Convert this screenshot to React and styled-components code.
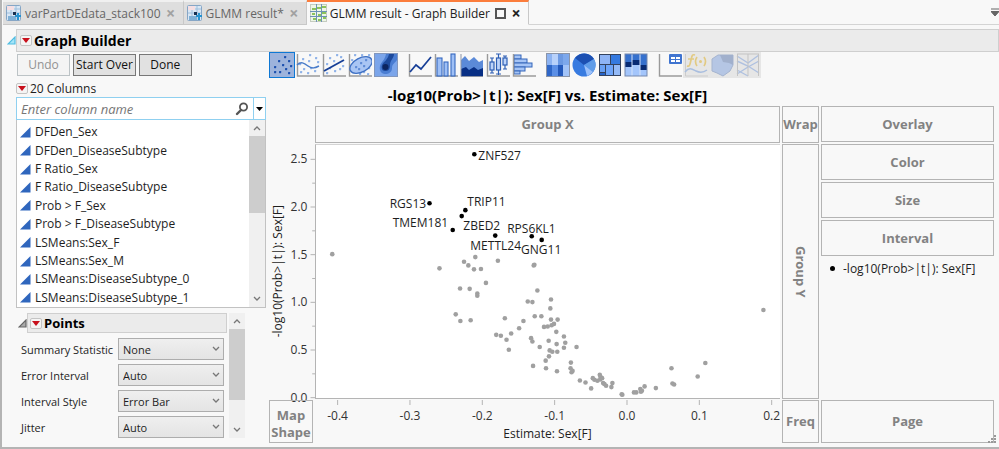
import React, { useState } from 'react'
import styled, { createGlobalStyle } from 'styled-components'

const COLUMNS = [
  'DFDen_Sex',
  'DFDen_DiseaseSubtype',
  'F Ratio_Sex',
  'F Ratio_DiseaseSubtype',
  'Prob > F_Sex',
  'Prob > F_DiseaseSubtype',
  'LSMeans:Sex_F',
  'LSMeans:Sex_M',
  'LSMeans:DiseaseSubtype_0',
  'LSMeans:DiseaseSubtype_1',
]

const OPTIONS = [
  { id: 'summary', label: 'Summary Statistic', values: ['None', 'Mean', 'Median'] },
  { id: 'error', label: 'Error Interval', values: ['Auto', 'None', 'Range'] },
  { id: 'style', label: 'Interval Style', values: ['Error Bar', 'Band'] },
  { id: 'jitter', label: 'Jitter', values: ['Auto', 'None'] },
]

// the plot area is divided in SPAN_X by SPAN_Y units
const SPAN_X = 1398
const SPAN_Y = 765
const px = (x) => `${(x / SPAN_X) * 100}%`
const py = (y) => `${(y / SPAN_Y) * 100}%`
const scaleX = (v) => 938 + v * 2175
const scaleY = (v) => 761 - v * 286

const X_TICKS = [-0.4, -0.3, -0.2, -0.1, 0, 0.1, 0.2]
const Y_TICKS = [0, 0.25, 0.5, 0.75, 1, 1.25, 1.5, 1.75, 2, 2.25, 2.5]

const GENES = [
  { name: 'ZNF527', at: [477, 28], label: [489, 45] },
  { name: 'RGS13', at: [342, 176], label: [222, 192] },
  { name: 'TRIP11', at: [450, 197], label: [456, 183] },
  { name: 'ZBED2', at: [439, 215], label: [444, 258] },
  { name: 'TMEM181', at: [412, 257], label: [231, 249] },
  { name: 'METTL24', at: [540, 274], label: [465, 318] },
  { name: 'RPS6KL1', at: [650, 276], label: [576, 266] },
  { name: 'GNG11', at: [680, 287], label: [618, 331] },
]

const POINTS = [
  [49, 330], [480, 339], [548, 350], [446, 353], [459, 364], [372, 373],
  [476, 376], [497, 375], [512, 417], [434, 434], [463, 435], [486, 449],
  [486, 456], [421, 512], [435, 532], [466, 530], [569, 524], [625, 532],
  [612, 554], [588, 570], [543, 574], [557, 577], [574, 589], [581, 619],
  [658, 362], [656, 364], [667, 440], [638, 473], [652, 475], [708, 467],
  [706, 494], [659, 518], [679, 518], [708, 528], [728, 528], [717, 541],
  [710, 545], [698, 549], [687, 550], [724, 565], [648, 584], [652, 594],
  [701, 592], [747, 579], [751, 598], [725, 602], [747, 613], [785, 611],
  [674, 611], [704, 621], [712, 625], [727, 625], [702, 639], [692, 652],
  [654, 668], [693, 675], [726, 684], [768, 658], [767, 675], [773, 683],
  [770, 687], [795, 712], [812, 718], [829, 736], [834, 705], [839, 710],
  [848, 713], [855, 695], [857, 701], [862, 705], [856, 709], [865, 720],
  [869, 723], [874, 728], [893, 720], [890, 732], [921, 754], [923, 755],
  [958, 748], [965, 748], [977, 738], [982, 743], [979, 746], [990, 730],
  [1024, 735], [1074, 721], [1079, 724], [1071, 675], [1150, 700],
  [1173, 659], [1348, 499],
]

const Axes = () => <path d="M1.5 1v22H24" fill="none" stroke="#9a9a9a" strokeWidth="1.4" />

const Dots = ({ list, color = '#4a7cc9', size = 2.2 }) =>
  list.map(([x, y]) => (
    <rect key={`${x}-${y}`} x={x} y={y} width={size} height={size} rx="0.6" fill={color} />
  ))

const ICONS = {
  points: (
    <>
      <rect x="0" y="0" width="24" height="24" fill="#9db3dc" />
      <Dots color="#1b4fae" list={[[14, 3], [8, 7], [18, 7], [4, 13], [12, 11], [20, 12], [9, 18], [15, 15], [18, 19], [4, 18]]} />
    </>
  ),
  smoother: (
    <>
      <Axes />
      <Dots color="#8fb2e8" list={[[13, 1], [6, 5], [19, 4], [12, 7], [3, 10], [21, 8], [7, 15], [14, 14], [18, 17], [4, 18], [11, 19]]} />
      <path d="M1 12c4-4 7-2 11 1s7 2 11 0" fill="none" stroke="#4a7cc9" strokeWidth="1.5" />
    </>
  ),
  fit: (
    <>
      <Axes />
      <Dots color="#8fb2e8" list={[[14, 1], [7, 4], [18, 3], [11, 7], [4, 10], [20, 12], [12, 17], [17, 15], [4, 19], [7, 14]]} />
      <path d="M2 18L22 7" stroke="#173f97" strokeWidth="1.8" />
    </>
  ),
  ellipse: (
    <>
      <Axes />
      <Dots color="#8fb2e8" list={[[6, 1], [13, 1], [3, 6], [20, 1], [20, 14], [4, 18], [15, 18], [19, 20], [11, 20]]} />
      <ellipse cx="13" cy="12" rx="12" ry="7" transform="rotate(-28 13 12)" fill="#a9c5f4" stroke="#3e70c4" strokeWidth="1.3" />
      <Dots color="#5f8bd6" list={[[7, 13], [12, 9], [15, 12], [17, 6], [10, 15]]} />
    </>
  ),
  contour: (
    <>
      <rect x="0.5" y="0.5" width="23" height="23" fill="#7ba5ea" stroke="#8297bd" />
      <path d="M12 1h11v6c-2 3-5 4-5 8s-3 6-7 6-6-4-5-8 5-6 6-12z" fill="#4a7dd2" />
      <path d="M15 1h5c0 4-4 6-4 11s-2 6-5 6-4-3-3-6 6-5 7-11z" fill="#1d4a9c" />
      <circle cx="11.500" cy="14" r="3" fill="#0c2560" />
    </>
  ),
  line: (
    <>
      <Axes />
      <path d="M2 19l6-7 5 4 10-12" fill="none" stroke="#173f97" strokeWidth="1.7" />
    </>
  ),
  bar: (
    <>
      <Axes />
      <g fill="#9fc0f6" stroke="#3568c0" strokeWidth="1.1">
        <rect x="3" y="5" width="5" height="18" />
        <rect x="10" y="9" width="4" height="14" />
        <rect x="17" y="1" width="4" height="22" />
      </g>
    </>
  ),
  area: (
    <>
      <path d="M1 23V7l4-4 4 5 5-4 5 5 4-2v16z" fill="#5b8ad8" />
      <path d="M1 23v-7l5-2 3 3 5-3 4 3 5-2v8z" fill="#082f85" />
      <path d="M1 1v22.500h22" fill="none" stroke="#8b93a5" />
    </>
  ),
  box: (
    <>
      <Axes />
      <g fill="#bdd4fa" stroke="#2e5fb5" strokeWidth="1.200">
        <path d="M6 5v15M12.500 1v21M19 3v13M4 5h4M4 20h4M10 1h5M10 21h5M17 3h4M17 16h4" />
        <rect x="4" y="9" width="4" height="8" />
        <rect x="10.500" y="5" width="4" height="12" />
        <rect x="17" y="5" width="4" height="7" />
      </g>
    </>
  ),
  histogram: (
    <>
      <g fill="#a5c4f5" stroke="#3466ba">
        <rect x="2" y="2" width="7" height="4" />
        <rect x="2" y="6" width="13" height="4" />
        <rect x="2" y="10" width="18" height="4" />
        <rect x="2" y="14" width="11" height="4" />
        <rect x="2" y="18" width="6" height="3" />
      </g>
      <Axes />
    </>
  ),
  heatmap: (
    <>
      <rect x="0" y="0" width="24" height="24" fill="#5b8fe6" />
      <rect x="1" y="1" width="5" height="11" fill="#8db3f1" />
      <rect x="6" y="1" width="6" height="11" fill="#b8d1fa" />
      <rect x="12" y="1" width="5" height="11" fill="#6c99e2" />
      <rect x="17" y="1" width="6" height="11" fill="#7da8ec" />
      <rect x="1" y="12" width="5" height="11" fill="#2f67c8" />
      <rect x="12" y="12" width="5" height="11" fill="#2459bb" />
      <rect x="17" y="12" width="6" height="11" fill="#a2c3f8" />
      <rect x="0.5" y="0.5" width="23" height="23" fill="none" stroke="#8a94a8" />
    </>
  ),
  pie: (
    <>
      <circle cx="12" cy="12" r="11.500" fill="#387be0" />
      <path d="M12 12L3 5A11.500 11.500 0 0 1 22 6z" fill="#1c50b2" />
      <path d="M12 12l10-6a11.500 11.500 0 0 1-1 13z" fill="#5f9ce8" />
      <path d="M12 12l9 7a11.500 11.500 0 0 1-6 4z" fill="#9ac0fb" />
    </>
  ),
  treemap: (
    <>
      <rect x="1" y="1" width="22" height="22" fill="#34435f" />
      <rect x="2" y="2" width="10" height="9" fill="#8eb4f5" />
      <rect x="13" y="2" width="9" height="9" fill="#357ae0" />
      <rect x="2" y="12" width="5" height="7" fill="#68a0f4" />
      <rect x="8" y="12" width="7" height="10" fill="#6ea5fa" />
      <rect x="2" y="20" width="5" height="2" fill="#2563c9" />
      <rect x="16" y="12" width="6" height="10" fill="#94baf7" />
    </>
  ),
  mosaic: (
    <>
      <rect x="1" y="1" width="22" height="22" fill="#3671ce" />
      <path d="M1 9h7v5H1zM8 7h8v5H8zM16 12h7v5h-7z" fill="#082b74" />
      <path d="M1 14h7v9H1zM8 12h8v11H8zM16 17h7v6h-7z" fill="#a3c5fb" />
      <path d="M8 1v22M16 1v22" stroke="#d5e3fa" />
      <rect x="1" y="1" width="22" height="22" fill="none" stroke="#7588ad" />
    </>
  ),
  caption: (
    <>
      <Axes />
      <rect x="11" y="1" width="13" height="10" rx="1" fill="#3f74d0" />
      <path d="M13 4h4v2h-4zM18 4h4v2h-4zM13 7h4v2h-4zM18 7h4v2h-4z" fill="#fff" />
    </>
  ),
  formula: (
    <>
      <path d="M1.500 1v22H24" fill="none" stroke="#ccc" />
      <path d="M11 2c-3-1-3 1-4 5s-1 7-4 6M4 6h6M13 4c-2 3-2 6 0 9M20 4c2 3 2 6 0 9" fill="none" stroke="#e2ca83" strokeWidth="1.700" />
      <circle cx="16.500" cy="8.500" r="1.500" fill="#e2ca83" />
      <path d="M1 19c4-5 7-3 11-1s7 2 11-1" fill="none" stroke="#a9bedf" strokeWidth="1.500" />
    </>
  ),
  map: (
    <>
      <path d="M2 6l6-4h15v10l-3 6-7 5-6-3-5-2z" fill="#b5c6e4" stroke="#a5b4cf" />
      <path d="M10 2h13v10l-4-2-6-1z" fill="#a1b0cc" />
    </>
  ),
  parallel: (
    <>
      <path d="M1 3l11 7 11-8M1 8l11 5 11 7M1 21l11-7 11-6M1 17l11 6" fill="none" stroke="#afc1e0" strokeWidth="1.400" />
      <path d="M1.500 1v22M12 1v22M22.500 1v22M1 1h22" fill="none" stroke="#c3c3c3" />
    </>
  ),
}

const TOOL_GROUPS = [
  ['points', 'smoother', 'fit', 'ellipse', 'contour'],
  ['line', 'bar', 'area', 'box', 'histogram'],
  ['heatmap', 'pie', 'treemap', 'mosaic'],
  ['caption', 'formula', 'map', 'parallel'],
]
const DISABLED = ['formula', 'map', 'parallel']

const TableIcon = () => (
  <svg width="16" height="18" viewBox="0 0 16 18" aria-hidden="true">
    <rect x="0.5" y="1.500" width="14" height="15" rx="1" fill="#d9e7f5" stroke="#86a6c6" />
    <path d="M1 5h13M1 9h13M5 2v14M10 2v14" stroke="#9fc0dd" />
    <path d="M1 2h7v4H1z" fill="#f5dfe3" />
    <path d="M7 8h3v3H7z" fill="#19304f" />
    <path d="M2 12h8v4H2z" fill="#7fb0d6" />
    <path d="M12 9v7M9 12h6" stroke="#2592cf" strokeWidth="2" />
  </svg>
)

const GraphIcon = () => (
  <svg width="17" height="18" viewBox="0 0 17 18" aria-hidden="true">
    <rect x="0.5" y="0.5" width="16" height="17" fill="#eef6e6" stroke="#c5ccc0" />
    <path d="M2 5h4M7 4h4M12 3h4M2 10h3M8 11h4M12 9h4M3 15h3M8 16h4M13 14h3" stroke="#8bc45c" strokeWidth="2" />
    <path d="M0 7.500h17M0 12.500h17M6.500 0v18M11.500 0v18" stroke="#6c93b5" />
  </svg>
)

const RedTriangle = () => (
  <TriangleButton type="button" aria-label="Options menu">
    <svg width="8" height="5" viewBox="0 0 8 5" aria-hidden="true">
      <path d="M0 0h8L4 5z" fill="#c8101c" />
    </svg>
  </TriangleButton>
)

const Disclosure = ({ fill, stroke }) => (
  <svg width="9" height="9" viewBox="0 0 9 9" aria-hidden="true">
    <path d="M8 1v7H1z" fill={fill} stroke={stroke} strokeWidth="1.200" />
  </svg>
)

const Chevron = ({ up }) => (
  <svg width="8" height="6" viewBox="0 0 8 6" aria-hidden="true">
    <path d={up ? 'M1 5l3-3 3 3' : 'M1 1l3 3 3-3'} fill="none" stroke="#777" strokeWidth="1.300" />
  </svg>
)

function Scroll({ thumb }) {
  return (
    <ScrollTrack aria-hidden="true">
      <ScrollArrow><Chevron up /></ScrollArrow>
      <ScrollThumb $size={thumb} />
      <ScrollArrow><Chevron /></ScrollArrow>
    </ScrollTrack>
  )
}

function Plot() {
  return (
    <PlotSvg role="img" aria-label="Scatter plot">
      {POINTS.map(([x, y]) => (
        <circle key={`${x}-${y}`} cx={px(x)} cy={py(y)} r="2.300" fill="#a0a0a0" />
      ))}
      {GENES.map((gene) => (
        <g key={gene.name}>
          <circle cx={px(gene.at[0])} cy={py(gene.at[1])} r="2.300" fill="#000" />
          <text x={px(gene.label[0])} y={py(gene.label[1])}>{gene.name}</text>
        </g>
      ))}
    </PlotSvg>
  )
}

function App() {
  const [search, setSearch] = useState('')
  const [tool, setTool] = useState('points')

  return (
    <Window>
      <GlobalStyle />
      <TabBar>
        <Tab><TableIcon /><TabName type="button">varPartDEdata_stack100</TabName><Close type="button" aria-label="Close tab">×</Close></Tab>
        <Tab><TableIcon /><TabName type="button">GLMM result*</TabName><Close type="button" aria-label="Close tab">×</Close></Tab>
        <Tab $active>
          <GraphIcon />
          <TabName type="button">GLMM result - Graph Builder</TabName>
          <Maximize type="button" aria-label="Maximize" />
          <Close $active type="button" aria-label="Close tab">×</Close>
        </Tab>
        <TabRest>
          <svg width="8" height="9" viewBox="0 0 8 9" aria-hidden="true">
            <path d="M0 1h8M0 3.500h8L4 8z" fill="#666" stroke="#666" />
          </svg>
        </TabRest>
      </TabBar>

      <Header>
        <Disclosure fill="#a5e4f8" stroke="#4fbde2" />
        <HeaderBar>
          <RedTriangle />
          <Heading>Graph Builder</Heading>
        </HeaderBar>
      </Header>

      <Body>
        <Side>
          <Buttons>
            <Button type="button" disabled>Undo</Button>
            <Button type="button">Start Over</Button>
            <Button type="button">Done</Button>
          </Buttons>
          <Count><RedTriangle />20 Columns</Count>
          <Search>
            <SearchInput
              type="text"
              aria-label="Column name"
              placeholder="Enter column name"
              value={search}
              onChange={(e) => setSearch(e.target.value)}
            />
            <svg width="14" height="14" viewBox="0 0 14 14" aria-hidden="true">
              <circle cx="8.500" cy="5" r="3.600" fill="none" stroke="#555" strokeWidth="1.800" />
              <path d="M6 8l-4 4" stroke="#555" strokeWidth="2.400" strokeLinecap="round" />
            </svg>
            <SearchMenu type="button" aria-label="Search options">
              <svg width="7" height="4" viewBox="0 0 7 4" aria-hidden="true"><path d="M0 0h7L3.500 4z" /></svg>
            </SearchMenu>
          </Search>
          <ListBox>
            <List>
              {COLUMNS.filter((c) => c.toLowerCase().includes(search.toLowerCase())).map((name) => (
                <Item key={name}>
                  <svg width="11" height="11" viewBox="0 0 11 11" aria-hidden="true">
                    <path d="M10.500 0v10.500H0z" fill="#2f66bd" />
                  </svg>
                  {name}
                </Item>
              ))}
            </List>
            <Scroll thumb={77} />
          </ListBox>
          <Panel>
            <PanelMain>
              <PanelHead>
                <Disclosure fill="#aaa" stroke="#666" />
                <PanelBar><RedTriangle /><PanelTitle>Points</PanelTitle></PanelBar>
              </PanelHead>
              <Options>
                {OPTIONS.map((opt) => (
                  <Option key={opt.id}>
                    <label htmlFor={opt.id}>{opt.label}</label>
                    <SelectWrap>
                      <Select id={opt.id} defaultValue={opt.values[0]}>
                        {opt.values.map((v) => <option key={v}>{v}</option>)}
                      </Select>
                      <SelectArrow><Chevron /></SelectArrow>
                    </SelectWrap>
                  </Option>
                ))}
              </Options>
            </PanelMain>
            <Scroll thumb={71} />
          </Panel>
        </Side>

        <Main>
          <Toolbar>
            {TOOL_GROUPS.map((group) => (
              <ToolGroup key={group[0]}>
                {group.map((id) => (
                  <Tool
                    key={id}
                    type="button"
                    aria-label={id}
                    $selected={tool === id}
                    disabled={DISABLED.includes(id)}
                    onClick={() => setTool(id)}
                  >
                    <svg width="24" height="24" viewBox="0 0 24 24" aria-hidden="true">{ICONS[id]}</svg>
                  </Tool>
                ))}
              </ToolGroup>
            ))}
          </Toolbar>

          <Graph>
            <Title>-log10(Prob&gt;|t|): Sex[F] vs. Estimate: Sex[F]</Title>
            <Zone $area="groupx">Group X</Zone>
            <Zone $area="wrap">Wrap</Zone>
            <YAxis>
              <YTitle>-log10(Prob&gt;|t|): Sex[F]</YTitle>
              <AxisSvg>
                {Y_TICKS.map((v) => {
                  const major = v % 0.5 === 0
                  return (
                    <g key={v}>
                      <line x1={major ? '84%' : '90%'} x2="100%" y1={py(scaleY(v))} y2={py(scaleY(v))} />
                      {major && <text x="73%" y={py(scaleY(v))} dy="4" textAnchor="end">{v.toFixed(1)}</text>}
                    </g>
                  )
                })}
              </AxisSvg>
            </YAxis>
            <PlotArea><Plot /></PlotArea>
            <Zone $area="groupy" $vertical>Group Y</Zone>
            <Legend>
              <Zone>Overlay</Zone>
              <Zone>Color</Zone>
              <Zone>Size</Zone>
              <Zone>Interval</Zone>
              <LegendItem><LegendDot />-log10(Prob&gt;|t|): Sex[F]</LegendItem>
            </Legend>
            <Zone $area="map" $low>Map<br />Shape</Zone>
            <XAxis>
              <AxisSvg>
                {X_TICKS.map((v) => (
                  <g key={v}>
                    <line x1={px(scaleX(v))} x2={px(scaleX(v))} y1="0" y2="5" />
                    <text x={px(scaleX(v))} y="20" textAnchor="middle">{v.toFixed(1)}</text>
                  </g>
                ))}
              </AxisSvg>
              <XTitle>Estimate: Sex[F]</XTitle>
            </XAxis>
            <Zone $area="freq">Freq</Zone>
            <Zone $area="page">
              Page
              <Grip width="9" height="9" viewBox="0 0 9 9" aria-hidden="true">
                <path d="M6 0h2v2H6zM6 3h2v2H6zM3 3h2v2H3zM6 6h2v2H6zM3 6h2v2H3zM0 6h2v2H0z" fill="#999" />
              </Grip>
            </Zone>
          </Graph>
        </Main>
      </Body>
    </Window>
  )
}

const GlobalStyle = createGlobalStyle`
  * {
    box-sizing: border-box;
  }
  body {
    margin: 0;
    background: #f8f8f8;
  }
  body, button, input, select {
    font-family: "Open Sans", "Noto Sans", sans-serif;
    font-size: 13px;
    color: #1e1e1e;
  }
  svg {
    flex: none;
  }
`

const Window = styled.div`
  display: flex;
  flex-direction: column;
  min-height: 100vh;
  border-left: 2px solid #b4b4b4;
  border-bottom: 2px solid #b4b4b4;
  background: #f8f8f8;
`

const TabBar = styled.div`
  display: flex;
  height: 25px;
  padding-left: 1px;
`

const Tab = styled.div`
  display: flex;
  align-items: center;
  gap: 3px;
  padding: 0 5px 0 3px;
  background: ${(p) => (p.$active ? '#f8f8f8' : '#dedede')};
  border-top: 2px solid ${(p) => (p.$active ? '#fb7d3c' : '#f0f0f0')};
  border-right: 1px solid #c8c8c8;
  border-bottom: 1px solid ${(p) => (p.$active ? '#f8f8f8' : '#c8c8c8')};
  button {
    color: ${(p) => (p.$active ? '#222' : '#666')};
  }
`

const TabName = styled.button`
  padding: 0;
  border: 0;
  background: none;
  font-size: 12px;
  white-space: nowrap;
`

const Close = styled.button`
  width: 14px;
  padding: 0;
  border: 0;
  background: none;
  font-size: 16px;
  line-height: 16px;
  font-weight: bold;
  opacity: ${(p) => (p.$active ? 1 : 0.5)};
`

const Maximize = styled.button`
  width: 11px;
  height: 11px;
  margin-left: 2px;
  padding: 0;
  border: 2px solid #555;
  background: none;
`

const TabRest = styled.div`
  display: flex;
  flex: 1;
  align-items: center;
  justify-content: flex-end;
  border-bottom: 1px solid #d4d4d4;
`

const Header = styled.div`
  display: flex;
  align-items: center;
  gap: 0;
  padding: 4px 0 0 5px;
`

const HeaderBar = styled.div`
  display: flex;
  flex: 1;
  align-items: center;
  gap: 2px;
  height: 23px;
  padding-left: 3px;
  border: 1px solid #cfcfcf;
  background: #ebebeb;
`

const Heading = styled.h1`
  margin: 0;
  font-size: 14px;
  color: #000;
`

const TriangleButton = styled.button`
  display: flex;
  align-items: center;
  justify-content: center;
  width: 12px;
  height: 11px;
  padding: 0;
  border: 1px solid #c4c4c4;
  border-radius: 2px;
  background: #f4f4f4;
`

const Body = styled.div`
  display: flex;
  flex: 1;
  gap: 3px;
  padding: 0 5px 4px 14px;
`

const Side = styled.div`
  display: flex;
  flex-direction: column;
  width: 250px;
`

const Buttons = styled.div`
  display: flex;
  gap: 3px;
  padding: 2px 0 0 1px;
`

const Button = styled.button`
  flex: none;
  min-width: 53px;
  height: 22px;
  padding: 0 2px;
  border: 1px solid #777;
  background: #e1e1e1;
  line-height: 18px;
  font-size: 12px;
  color: #111;
  &:disabled {
    border-color: #bcc3c6;
    background: #f4f4f4;
    color: #929292;
  }
`

const Count = styled.div`
  display: flex;
  align-items: center;
  gap: 2px;
  height: 18px;
  margin-top: 3px;
  font-size: 12px;
`

const Search = styled.div`
  display: flex;
  align-items: center;
  height: 23px;
  border: 1px solid #8fd0f0;
  background: #fff;
`

const SearchInput = styled.input`
  flex: 1;
  min-width: 0;
  padding: 0 4px;
  border: 0;
  outline: 0;
  background: none;
  &::placeholder {
    color: #777;
    font-style: italic;
  }
`

const SearchMenu = styled.button`
  display: flex;
  align-items: center;
  justify-content: center;
  width: 12px;
  height: 21px;
  margin-left: 4px;
  padding: 0;
  border: 0;
  border-left: 1px solid #8fd0f0;
  background: #fff;
`

const ListBox = styled.div`
  display: flex;
  height: 188px;
  border: 1px solid #c2c2c2;
  border-top: 0;
  background: #fff;
`

const List = styled.ul`
  display: flex;
  flex: 1;
  flex-direction: column;
  margin: 0;
  padding: 3px 3px 0;
  list-style: none;
`

const Item = styled.li`
  display: flex;
  flex: 1;
  align-items: center;
  gap: 4px;
  max-height: 20px;
  line-height: 18px;
  font-size: 12px;
`

const ScrollTrack = styled.div`
  width: 16px;
  display: flex;
  flex: none;
  flex-direction: column;
  background: #f0f0f0;
`

const ScrollArrow = styled.div`
  display: flex;
  align-items: center;
  justify-content: center;
  height: 16px;
  &:last-child {
    margin-top: auto;
  }
`

const ScrollThumb = styled.div`
  height: ${(p) => p.$size}px;
  background: #cdcdcd;
`

const Panel = styled.div`
  display: flex;
  gap: 2px;
  width: 229px;
  height: 125px;
  margin-top: 5px;
  overflow: hidden;
`

const PanelMain = styled.div`
  flex: 1;
  padding-left: 2px;
`

const PanelHead = styled.div`
  display: flex;
  align-items: center;
`

const PanelBar = styled.div`
  display: flex;
  flex: 1;
  align-items: center;
  gap: 2px;
  height: 20px;
  padding-left: 2px;
  border: 1px solid #cfcfcf;
  background: #ebebeb;
`

const PanelTitle = styled.h2`
  margin: 0;
  font-size: 13px;
  color: #000;
`

const Options = styled.div`
  display: flex;
  flex-direction: column;
  gap: 4px;
  padding: 5px 3px 0;
`

const Option = styled.div`
  display: flex;
  align-items: center;
  justify-content: space-between;
  height: 22px;
  font-size: 11px;
  white-space: nowrap;
`

const SelectWrap = styled.div`
  position: relative;
  width: 106px;
`

const Select = styled.select`
  width: 100%;
  height: 22px;
  padding: 0 4px;
  border: 1px solid #adadad;
  border-radius: 0;
  background: linear-gradient(#efefef, #e4e4e4);
  font-size: 11px;
  appearance: none;
`

const SelectArrow = styled.span`
  position: absolute;
  top: 0;
  right: 4px;
  bottom: 0;
  display: flex;
  align-items: center;
  pointer-events: none;
`

const Main = styled.div`
  display: flex;
  flex: 1;
  flex-direction: column;
  min-width: 0;
`

const Toolbar = styled.div`
  display: flex;
  gap: 8px;
  height: 28px;
`

const ToolGroup = styled.div`
  display: flex;
`

const Tool = styled.button`
  display: flex;
  align-items: center;
  justify-content: center;
  width: 26px;
  height: 26px;
  padding: 0;
  border: ${(p) => (p.$selected ? '2px solid #0f78d4' : '0')};
  background: none;
  &:disabled {
    background: #e6e6e6;
  }
`

const Graph = styled.div`
  display: grid;
  flex: 1;
  grid-template-columns: 44px minmax(0, 1fr) 37px 173px;
  grid-template-rows: 25px 37px minmax(0, 1fr) 43px;
  grid-template-areas:
    "title title title ."
    ". groupx wrap legend"
    "yaxis plot groupy legend"
    "map xaxis freq page";
  column-gap: 2px;
  row-gap: 1px;
`

const Title = styled.h2`
  grid-column: 2;
  grid-row: 1;
  margin: 0;
  line-height: 30px;
  font-size: 15px;
  color: #000;
  text-align: center;
  white-space: nowrap;
`

const Zone = styled.div`
  position: relative;
  grid-area: ${(p) => p.$area || 'auto'};
  display: flex;
  align-items: center;
  justify-content: center;
  padding-top: ${(p) => (p.$low ? '4px' : '0')};
  border: 1px solid #b4b4b4;
  line-height: 17px;
  font-weight: bold;
  color: #828282;
  text-align: center;
  writing-mode: ${(p) => (p.$vertical ? 'vertical-rl' : 'horizontal-tb')};
`

const Grip = styled.svg`
  position: absolute;
  right: -4px;
  bottom: -2px;
`

const YAxis = styled.div`
  grid-area: yaxis;
  display: flex;
  align-items: center;
  margin-right: -2px;
`

const YTitle = styled.div`
  writing-mode: vertical-rl;
  transform: rotate(180deg);
  width: 18px;
  line-height: 18px;
  font-size: 12px;
  white-space: nowrap;
`

const AxisSvg = styled.svg`
  flex: 1;
  width: 100%;
  min-width: 0;
  height: 100%;
  min-height: 0;
  overflow: visible;
  font-size: 12px;
  text {
    fill: #333;
  }
  line {
    stroke: #b4b4b4;
  }
`

const PlotArea = styled.div`
  grid-area: plot;
  border-left: 1px solid #b4b4b4;
  border-top: 1px solid #d4d4d4;
  border-bottom: 1px solid #b4b4b4;
  background: #fff;
`

const PlotSvg = styled.svg`
  display: block;
  width: 100%;
  height: 100%;
  font-size: 12px;
  text {
    fill: #1e1e1e;
  }
`

const Legend = styled.div`
  grid-area: legend;
  display: grid;
  grid-template-rows: repeat(4, 36px) 20px;
  row-gap: 2px;
  align-content: start;
`

const LegendItem = styled.div`
  display: flex;
  align-items: center;
  gap: 8px;
  padding-left: 9px;
  font-size: 12px;
  white-space: nowrap;
`

const LegendDot = styled.span`
  width: 5px;
  height: 5px;
  border-radius: 50%;
  background: #000;
`

const XAxis = styled.div`
  grid-area: xaxis;
  display: flex;
  flex-direction: column;
`

const XTitle = styled.div`
  line-height: 18px;
  font-size: 12px;
  text-align: center;
`

export default App
